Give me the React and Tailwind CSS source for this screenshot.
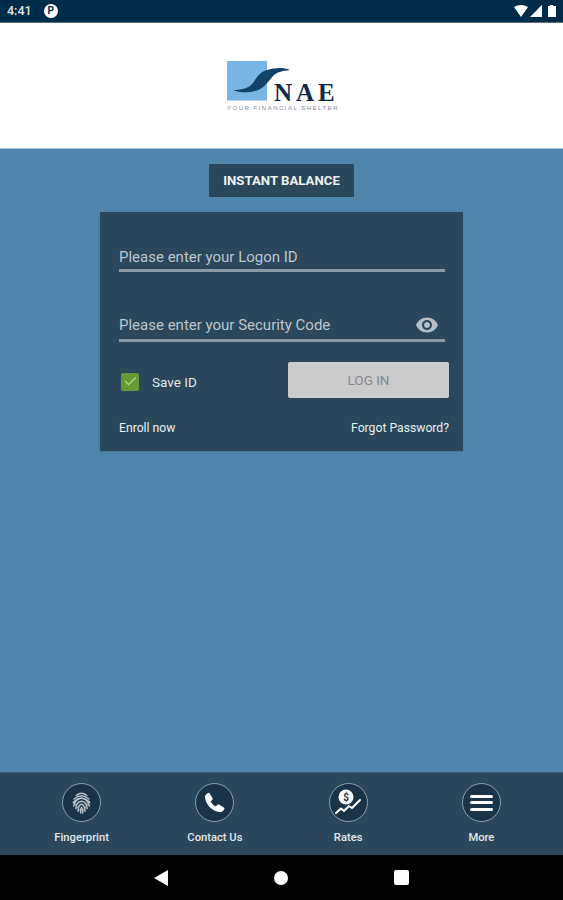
import React from 'react';
import { Check } from 'lucide-react';

const Logo = () => (
  <div className="relative w-[112px] h-[64px]">
    <svg width="112" height="40" viewBox="0 0 112 40" className="block">
      <rect x="0" y="0" width="40" height="39.500" fill="#78b4e4" />
      <path d="M6 29 C14 29 21 28 26 22 C30 16 33 11 40 9 C47 7 56 6 63 9 C55 10 50 11 46 15 C41 21 37 27 30 29.500 C22 32 13 32 6 29 Z" fill="#0f4468" />
    </svg>
    <span className="absolute left-[47px] top-[23px] font-['Liberation_Serif',serif] font-bold text-[25px] leading-[18px] tracking-[4px] text-[#0e2a52]">NAE</span>
    <span className="absolute left-0 top-[43px] whitespace-nowrap font-['Liberation_Sans',sans-serif] text-[6px] leading-[8px] tracking-[1.5px] text-[#7f8c97]">YOUR FINANCIAL SHELTER</span>
  </div>
);

const Field = ({ label, className, textClass, children }) => (
  <div className={`flex items-center justify-between h-[26px] box-content border-b-[3px] border-[#8a9aa5] mr-[4px] ${className}`}>
    <span className={`text-[15px] leading-[20px] text-[#bcc6cd] ${textClass}`}>{label}</span>
    {children}
  </div>
);

const NavItem = ({ label, children }) => (
  <div className="flex-1 flex flex-col items-center">
    <div className="w-[39px] h-[39px] rounded-full border border-[#8ba0ad] bg-[#1a3347] flex items-center justify-center">
      {children}
    </div>
    <span className="mt-[9px] text-[11.200px] leading-[14px] font-medium text-[#e3e8ec]">{label}</span>
  </div>
);

const App = () => {
  return (
    <div className="w-[563px] h-[900px] flex flex-col overflow-hidden bg-[#5086ab] font-[Roboto,sans-serif]">
      {/* status bar */}
      <div className="h-[23px] shrink-0 bg-[#002b49] border-b border-[#5b6f7d] flex items-center justify-between pl-[7px] pr-[7px]">
        <div className="flex items-center gap-[12px]">
          <span className="text-[12.500px] leading-[16px] font-medium text-[#dfe5e9]">4:41</span>
          <span className="w-[14px] h-[14px] rounded-full bg-white flex items-center justify-center text-[10px] leading-none font-bold text-[#002b49]">P</span>
        </div>
        <svg width="42" height="14" viewBox="0 0 42 14">
          <path d="M0 3 Q7 -1 14 3 L7 13 Z" fill="#fff" />
          <path d="M28 1 V13 H16 Z" fill="#fff" />
          <path d="M28 1 V13 H24 V5 Z" fill="#fff" opacity="0.7" />
          <path d="M34 2 H36 V1 H39 V2 H42 V13 H34 Z" fill="#fff" />
        </svg>
      </div>

      {/* logo header */}
      <div className="h-[126px] shrink-0 bg-white border-b border-[#a9c3d5] flex justify-center pt-[38px] pl-[3px]">
        <Logo />
      </div>

      {/* main */}
      <div className="flex-1 flex flex-col items-center pt-[15px]">
        <button className="w-[145px] h-[33px] bg-[#2a475b] text-[13.200px] font-bold text-[#eef1f3] rounded-[1px]">
          INSTANT BALANCE
        </button>

        <div className="mt-[15px] w-[363px] h-[239px] bg-[#2a475b] shadow-sm pl-[19px] pr-[14px] pt-[31px]">
          <Field label="Please enter your Logon ID" textClass="mt-[2px]" />
          <Field label="Please enter your Security Code" className="mt-[41px]" textClass="-mt-[2px]">
            <svg width="24" height="24" viewBox="0 0 24 24" fill="#b5c0c7" className="mr-[6px] -mt-[2px]">
              <path d="M12 4.500C7 4.500 2.730 7.610 1 12c1.730 4.390 6 7.500 11 7.500s9.270-3.110 11-7.500c-1.730-4.390-6-7.500-11-7.500zM12 17c-2.760 0-5-2.240-5-5s2.240-5 5-5 5 2.240 5 5-2.240 5-5 5zm0-8c-1.660 0-3 1.340-3 3s1.340 3 3 3 3-1.340 3-3-1.340-3-3-3z" />
            </svg>
          </Field>

          <div className="mt-[20px] flex items-center justify-between">
            <label className="flex items-center gap-[13px] pl-[2px] pt-[3px]">
              <span className="w-[18px] h-[18px] rounded-[2px] bg-[#639a31] flex items-center justify-center">
                <Check size={15} strokeWidth={2} className="text-[#b9d6a0]" />
              </span>
              <span className="text-[13.500px] leading-[16px] text-[#e3e8ec]">Save ID</span>
            </label>
            <button className="w-[161px] h-[36px] bg-[#cbcbcb] rounded-[2px] text-[13.500px] text-[#808b92]">
              LOG IN
            </button>
          </div>

          <div className="mt-[22px] flex items-center justify-between text-[12.200px] leading-[16px] text-[#e9edf0]">
            <span>Enroll now</span>
            <span>Forgot Password?</span>
          </div>
        </div>
      </div>

      {/* bottom nav */}
      <div className="h-[83px] shrink-0 bg-[#2a475b] border-t border-[#3a5d75] flex px-[15px] pt-[10px]">
        <NavItem label="Fingerprint">
          <svg width="21" height="25" viewBox="0 0 24 26" fill="none" stroke="#b9c2c8" strokeWidth="1.700" strokeLinecap="round">
            <path d="M6 5 Q12 0 18 5" />
            <path d="M3.500 9 Q12 1.500 20.500 9" />
            <path d="M2.500 13 Q12 3.500 21.500 13" />
            <path d="M3 17 Q5 9 12 8 Q19 9 21 17" />
            <path d="M5.500 20 Q6 12 12 11.500 Q18 12 18.500 20" />
            <path d="M8 23 Q8.500 15 12 15 Q15.500 15 16 23" />
            <path d="M11 25 Q11 19 12 18.500 Q13 19 13.500 25" />
            <path d="M3 12 L10 22 M21 12 L14 22" strokeWidth="1" />
          </svg>
        </NavItem>
        <NavItem label="Contact Us">
          <svg width="23" height="23" viewBox="0 0 24 24" fill="#fff">
            <path d="M6.600 2 L10 7.500 C10.300 8 10.200 8.500 9.800 9 L8 11 C9.200 13.300 10.800 14.900 13.200 16.200 L15.300 14.300 C15.700 13.900 16.200 13.800 16.700 14.100 L22 17.400 C22.500 17.700 22.500 18.200 22.300 18.700 C21.500 20.800 19.600 22 17.500 22 C9.500 21 3 14.500 2 6.500 C2 4.400 3.500 2.700 5.500 2 C5.900 1.800 6.300 1.700 6.600 2 Z" />
          </svg>
        </NavItem>
        <NavItem label="Rates">
          <svg width="30" height="30" viewBox="0 0 30 30" fill="none">
            <circle cx="13" cy="9" r="7.500" fill="#fff" />
            <text x="13" y="12.500" textAnchor="middle" fontSize="10" fontWeight="700" fill="#1a3347" fontFamily="Roboto, sans-serif">$</text>
            <path d="M3 25 L8 20.500 L11 23 L16 18 L19 20 L27 12" stroke="#fff" strokeWidth="2" strokeLinejoin="round" strokeLinecap="round" />
          </svg>
        </NavItem>
        <NavItem label="More">
          <div className="flex flex-col gap-[3.500px]">
            <span className="block w-[23px] h-[3px] bg-white rounded-full" />
            <span className="block w-[23px] h-[3px] bg-white rounded-full" />
            <span className="block w-[23px] h-[3px] bg-white rounded-full" />
          </div>
        </NavItem>
      </div>

      {/* android nav */}
      <div className="h-[45px] shrink-0 bg-black flex items-center justify-center gap-[106px]">
        <svg width="14" height="16" viewBox="0 0 14 16"><path d="M14 0 V16 L0 8 Z" fill="#fff" /></svg>
        <span className="w-[14px] h-[14px] rounded-full bg-white" />
        <span className="w-[15px] h-[15px] rounded-[2px] bg-white" />
      </div>
    </div>
  );
};

export default App;
